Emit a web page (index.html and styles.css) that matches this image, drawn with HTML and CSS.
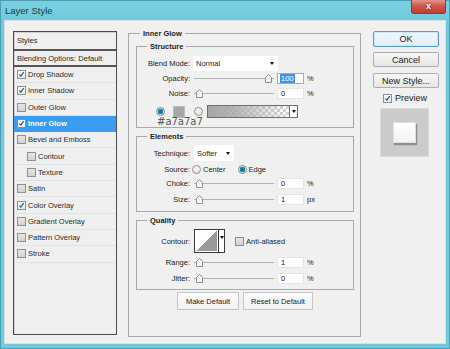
FILE: index.html
```html
<!DOCTYPE html>
<html>
<head>
<meta charset="utf-8">
<title>Layer Style</title>
<link rel="stylesheet" href="styles.css">
</head>
<body>
<div class="window">
  <div class="titlebar">
    <span class="title">Layer Style</span>
    <span class="close">x</span>
  </div>
  <div class="client">
    <div class="stylelist">
      <div class="li head h1">Styles</div>
      <div class="li head h2">Blending Options: Default</div>
      <div class="li"><span class="cb on"><svg viewBox="0 0 9 9"><path d="M1.8 4.6L3.7 6.6L7.4 1.6"/></svg></span>Drop Shadow</div>
      <div class="li"><span class="cb on"><svg viewBox="0 0 9 9"><path d="M1.8 4.6L3.7 6.6L7.4 1.6"/></svg></span>Inner Shadow</div>
      <div class="li"><span class="cb"></span>Outer Glow</div>
      <div class="li sel"><span class="cb on"><svg viewBox="0 0 9 9"><path d="M1.8 4.6L3.7 6.6L7.4 1.6"/></svg></span>Inner Glow</div>
      <div class="li"><span class="cb"></span>Bevel and Emboss</div>
      <div class="li sub"><span class="cb"></span>Contour</div>
      <div class="li sub"><span class="cb"></span>Texture</div>
      <div class="li"><span class="cb"></span>Satin</div>
      <div class="li"><span class="cb on"><svg viewBox="0 0 9 9"><path d="M1.8 4.6L3.7 6.6L7.4 1.6"/></svg></span>Color Overlay</div>
      <div class="li"><span class="cb"></span>Gradient Overlay</div>
      <div class="li"><span class="cb"></span>Pattern Overlay</div>
      <div class="li"><span class="cb"></span>Stroke</div>
    </div>

    <div class="group main">
      <div class="legend">Inner Glow</div>

      <div class="group structure">
        <div class="legend">Structure</div>
        <div class="row r-blend">
          <span class="lbl">Blend Mode:</span>
          <div class="select blend"><span>Normal</span><i class="arrow"></i></div>
        </div>
        <div class="row r-op">
          <span class="lbl">Opacity:</span>
          <div class="slider max"><svg class="thumb" viewBox="0 0 7 9"><path d="M0.5 8.5V3.5L3.5 0.5L6.5 3.5V8.5Z"/></svg></div>
          <div class="field focus"><span class="hl">100</span></div>
          <span class="unit">%</span>
        </div>
        <div class="row r-noise">
          <span class="lbl">Noise:</span>
          <div class="slider"><svg class="thumb" viewBox="0 0 7 9"><path d="M0.5 8.5V3.5L3.5 0.5L6.5 3.5V8.5Z"/></svg></div>
          <div class="field">0</div>
          <span class="unit">%</span>
        </div>
        <div class="row r-color">
          <span class="radio on"></span>
          <span class="swatch"></span>
          <span class="radio"></span>
          <div class="gradient"><div class="grad-fill"></div><div class="grad-arrow"><i class="arrow"></i></div></div>
        </div>
      </div>

      <div class="group elements">
        <div class="legend">Elements</div>
        <div class="row r-tech">
          <span class="lbl">Technique:</span>
          <div class="select tech"><span>Softer</span><i class="arrow"></i></div>
        </div>
        <div class="row r-src">
          <span class="lbl">Source:</span>
          <span class="radio"></span><span class="opt">Center</span>
          <span class="radio on edge"></span><span class="opt">Edge</span>
        </div>
        <div class="row r-choke">
          <span class="lbl">Choke:</span>
          <div class="slider"><svg class="thumb" viewBox="0 0 7 9"><path d="M0.5 8.5V3.5L3.5 0.5L6.5 3.5V8.5Z"/></svg></div>
          <div class="field">0</div>
          <span class="unit">%</span>
        </div>
        <div class="row r-size">
          <span class="lbl">Size:</span>
          <div class="slider"><svg class="thumb" viewBox="0 0 7 9"><path d="M0.5 8.5V3.5L3.5 0.5L6.5 3.5V8.5Z"/></svg></div>
          <div class="field">1</div>
          <span class="unit">px</span>
        </div>
      </div>

      <div class="group quality">
        <div class="legend">Quality</div>
        <div class="row r-contour">
          <span class="lbl">Contour:</span>
          <div class="contour"><div class="curve"></div><div class="c-arrow"><i class="arrow"></i></div></div>
          <span class="cb aa"></span><span class="opt">Anti-aliased</span>
        </div>
        <div class="row r-range">
          <span class="lbl">Range:</span>
          <div class="slider"><svg class="thumb" viewBox="0 0 7 9"><path d="M0.5 8.5V3.5L3.5 0.5L6.5 3.5V8.5Z"/></svg></div>
          <div class="field">1</div>
          <span class="unit">%</span>
        </div>
        <div class="row r-jitter">
          <span class="lbl">Jitter:</span>
          <div class="slider"><svg class="thumb" viewBox="0 0 7 9"><path d="M0.5 8.5V3.5L3.5 0.5L6.5 3.5V8.5Z"/></svg></div>
          <div class="field">0</div>
          <span class="unit">%</span>
        </div>
      </div>

      <div class="defaults">
        <div class="pbtn make">Make Default</div>
        <div class="pbtn reset">Reset to Default</div>
      </div>
    </div>

    <div class="side">
      <div class="btn ok">OK</div>
      <div class="btn cancel">Cancel</div>
      <div class="btn newstyle">New Style...</div>
      <div class="preview-row"><span class="cb on"><svg viewBox="0 0 9 9"><path d="M1.8 4.6L3.7 6.6L7.4 1.6"/></svg></span><span>Preview</span></div>
      <div class="preview"><div class="sample"></div></div>
    </div>
  </div>
  <div class="note">#a7a7a7</div>
</div>
</body>
</html>
```
FILE: styles.css
```css
* { box-sizing: border-box; margin: 0; padding: 0; }
html, body { width: 450px; height: 349px; overflow: hidden; }
body {
  font-family: "Liberation Sans", Arial, sans-serif;
  font-size: 7.5px;
  color: #1e1e1e;
  background: #6fcadb;
}

.window {
  position: relative;
  width: 450px;
  height: 349px;
  background: linear-gradient(#7ad0e1, #6cc8da 30px, #6fcadc);
  border: 1px solid #4a9fb3;
  display: flex;
  flex-direction: column;
}

.titlebar {
  height: 19px;
  display: flex;
  align-items: flex-start;
  justify-content: space-between;
}
.title {
  font-size: 9.5px;
  color: #1c3a46;
  line-height: 19px;
  padding-left: 4px;
}
.close {
  width: 35px;
  height: 14px;
  margin-top: -1px;
  margin-right: 3px;
  border: 1px solid #8e3a32;
  border-top: none;
  border-radius: 0 0 3px 3px;
  background: linear-gradient(#e3968d, #d0574c 45%, #c23d31);
  color: #fff;
  font-weight: bold;
  font-size: 9px;
  line-height: 13px;
  text-align: center;
  text-shadow: 0 0 2px #7a1f18;
}

.client {
  margin: 0 3px;
  height: 324px;
  background: #f0f0f0;
  border: 1px solid #d6dfe2;
  display: flex;
  align-items: flex-start;
  padding: 10px 0 0 8px;
}

/* Styles list */
.stylelist {
  width: 104px;
  height: 304px;
  border: 1px solid #4b4b4b;
  background: #efefef;
  box-shadow: inset 1px 1px 0 #d0d0d0;
}
.li {
  height: 16.3px;
  display: flex;
  align-items: center;
  padding-left: 3px;
  border-bottom: 1px solid #e1e1e1;
  color: #2a2a2a;
  white-space: nowrap;
}
.li.head { padding-left: 3px; border-bottom: 2px solid #555; }
.li.h1 { height: 19px; }
.li.h2 { height: 16px; }
.li.sub { padding-left: 13px; }
.li.sel {
  background: #3a9cf0;
  color: #fff;
  font-weight: bold;
  border-bottom-color: #3a9cf0;
}
.cb {
  width: 9px;
  height: 9px;
  flex: none;
  border: 1px solid #8f8f8f;
  background: linear-gradient(#e6e6e6, #d2d2d2);
  margin-right: 2px;
  display: inline-flex;
}
.cb.on { background: linear-gradient(#fbfbfb, #e9e9e9); }
.cb svg { width: 7px; height: 7px; }
.cb svg path { fill: none; stroke: #1b5f8e; stroke-width: 1.6; }

/* Groups */
.group {
  border: 1px solid #a9a9a9;
  padding: 0 6px 0 7px;
}
.legend {
  display: table;
  margin: -6px 0 0 3px;
  padding: 0 3px;
  background: #f0f0f0;
  font-weight: bold;
  line-height: 11px;
  color: #222;
}
.group.main {
  width: 233px;
  height: 304px;
  margin: 2px 0 0 11px;
}
.group.main > .legend { margin-left: 4px; }
.group.structure { width: 218px; height: 82px; margin-top: 7px; padding-left: 7px; }
.group.elements { width: 218px; height: 76px; margin-top: 8px; }
.group.quality { width: 218px; height: 70px; margin-top: 8px; }

.row { display: flex; align-items: center; }
.lbl {
  width: 46px;
  flex: none;
  text-align: right;
  margin-right: 4px;
  color: #222;
  white-space: nowrap;
}
.r-blend { height: 15px; margin-top: 4px; }
.r-op { height: 11px; margin-top: 2px; }
.r-noise { height: 11px; margin-top: 4px; }
.r-color { height: 13px; margin-top: 6px; }
.r-tech { height: 16px; margin-top: 3px; }
.r-src { height: 11px; margin-top: 3px; }
.r-choke { height: 11px; margin-top: 3px; }
.r-size { height: 11px; margin-top: 5px; }
.r-contour { height: 24px; margin-top: 3px; }
.r-range { height: 11px; margin-top: 4px; }
.r-jitter { height: 11px; margin-top: 5px; }

.select {
  background: #fff;
  display: flex;
  align-items: center;
  padding-left: 3px;
  color: #222;
}
.select span { flex: 1; }
.select.blend { width: 85px; height: 15px; margin-left: -1px; }
.select.tech { width: 40px; height: 16px; }
.arrow {
  display: block;
  width: 0;
  height: 0;
  border-left: 2.5px solid transparent;
  border-right: 2.5px solid transparent;
  border-top: 3px solid #111;
  margin-right: 4px;
}

.slider {
  width: 80px;
  height: 11px;
  padding: 0 2px;
  display: flex;
  align-items: center;
  background: linear-gradient(#b2b2b2, #b2b2b2) center / 100% 1px no-repeat;
}
.slider.max { justify-content: flex-end; }
.thumb { width: 7px; height: 9px; display: block; }
.thumb path { fill: #f6f6f6; stroke: #8d8d8d; stroke-width: 1; }

.field {
  width: 27px;
  height: 11px;
  margin-left: 3px;
  background: #fff;
  border: 1px solid #e4e4e4;
  padding-left: 3px;
  line-height: 9px;
  color: #111;
}
.field.focus { border-color: #86b3de; padding-left: 2px; }
.hl { background: #3f93e8; color: #fff; padding: 0 1px; }
.unit { margin-left: 3px; color: #222; }

.radio {
  width: 9px;
  height: 9px;
  flex: none;
  border-radius: 50%;
  border: 1px solid #8e8e8e;
  background: linear-gradient(#fafafa, #e4e4e4);
}
.radio.on {
  background: radial-gradient(circle, #17729c 0, #1b83b0 2.6px, #dbeef5 3.1px);
  border-color: #7b8f99;
}
.r-color .radio.on { margin-left: 12px; }
.swatch {
  width: 12px;
  height: 12px;
  margin-left: 8px;
  background: #a7a7a7;
  border: 1px solid #b9b9b9;
}
.r-color .radio:not(.on) { margin-left: 9px; }
.gradient {
  width: 91px;
  height: 13px;
  margin-left: 4px;
  border: 1px solid #6e6e6e;
  display: flex;
}
.grad-fill {
  flex: 1;
  background:
    linear-gradient(to right, #a7a7a7, rgba(167,167,167,0.85) 30%, rgba(167,167,167,0)),
    repeating-conic-gradient(#ffffff 0 25%, #d4d4d4 0 50%) 0 0 / 6px 6px;
}
.grad-arrow {
  width: 8px;
  background: #fff;
  border-left: 1px solid #6e6e6e;
  display: flex;
  align-items: center;
  justify-content: center;
}
.grad-arrow .arrow { margin: 0; }

.r-src .lbl { margin-right: 2px; }
.opt { margin-left: 2px; color: #222; white-space: nowrap; }
.r-src .radio.edge { margin-left: 12px; }

.contour {
  width: 31px;
  height: 24px;
  border: 1px solid #3a3a3a;
  background: #fff;
  display: flex;
}
.curve {
  width: 23px;
  background: linear-gradient(to bottom right, #ffffff 50%, #9a9a9a 50%);
  border: 1px solid #fff;
}
.c-arrow {
  flex: 1;
  border-left: 1px solid #3a3a3a;
  display: flex;
  justify-content: center;
  padding-top: 6px;
}
.c-arrow .arrow { margin: 0; border-left-width: 2px; border-right-width: 2px; }
.cb.aa { margin-left: 10px; margin-right: 0; }

.defaults {
  display: flex;
  justify-content: center;
  gap: 4px;
  margin-top: 2px;
}
.pbtn {
  height: 18px;
  border: 1px solid #c6c6c6;
  background: linear-gradient(#fbfbfb, #f1f1f1);
  display: flex;
  align-items: center;
  justify-content: center;
  color: #222;
}
.pbtn.make { width: 62px; }
.pbtn.reset { width: 70px; }

/* Right column */
.side {
  width: 66px;
  margin-left: 12px;
  display: flex;
  flex-direction: column;
}
.btn {
  height: 15px;
  border: 1px solid #adadad;
  border-radius: 2px;
  background: linear-gradient(#f6f6f6, #e6e6e6);
  font-size: 9px;
  color: #202020;
  display: flex;
  align-items: center;
  justify-content: center;
}
.btn.ok {
  height: 16px;
  border-color: #5b9cc9;
  background: linear-gradient(#eef7fd, #e1f0fa);
  box-shadow: inset 0 0 0 1px #cfe8f8;
}
.btn.cancel { margin-top: 5px; }
.btn.newstyle { margin-top: 6px; }
.preview-row {
  height: 10px;
  margin-top: 5px;
  padding-left: 10px;
  display: flex;
  align-items: center;
  font-size: 9px;
  color: #202020;
}
.preview-row .cb { margin-right: 3px; }
.preview {
  width: 49px;
  height: 49px;
  margin: 5px 0 0 7px;
  background: #cbcbcb;
  border: 1px solid #dadada;
  display: flex;
  align-items: center;
  justify-content: center;
}
.sample {
  width: 23px;
  height: 21px;
  background: linear-gradient(#ffffff, #f2f2f2);
  border: 1px solid #e0e0e0;
  box-shadow: 1px 2px 1px #8e8e8e;
}

.note {
  position: absolute;
  left: 156px;
  top: 115px;
  font-family: "DejaVu Sans", sans-serif;
  font-size: 10px;
  line-height: 12px;
  color: #555;
}
```
